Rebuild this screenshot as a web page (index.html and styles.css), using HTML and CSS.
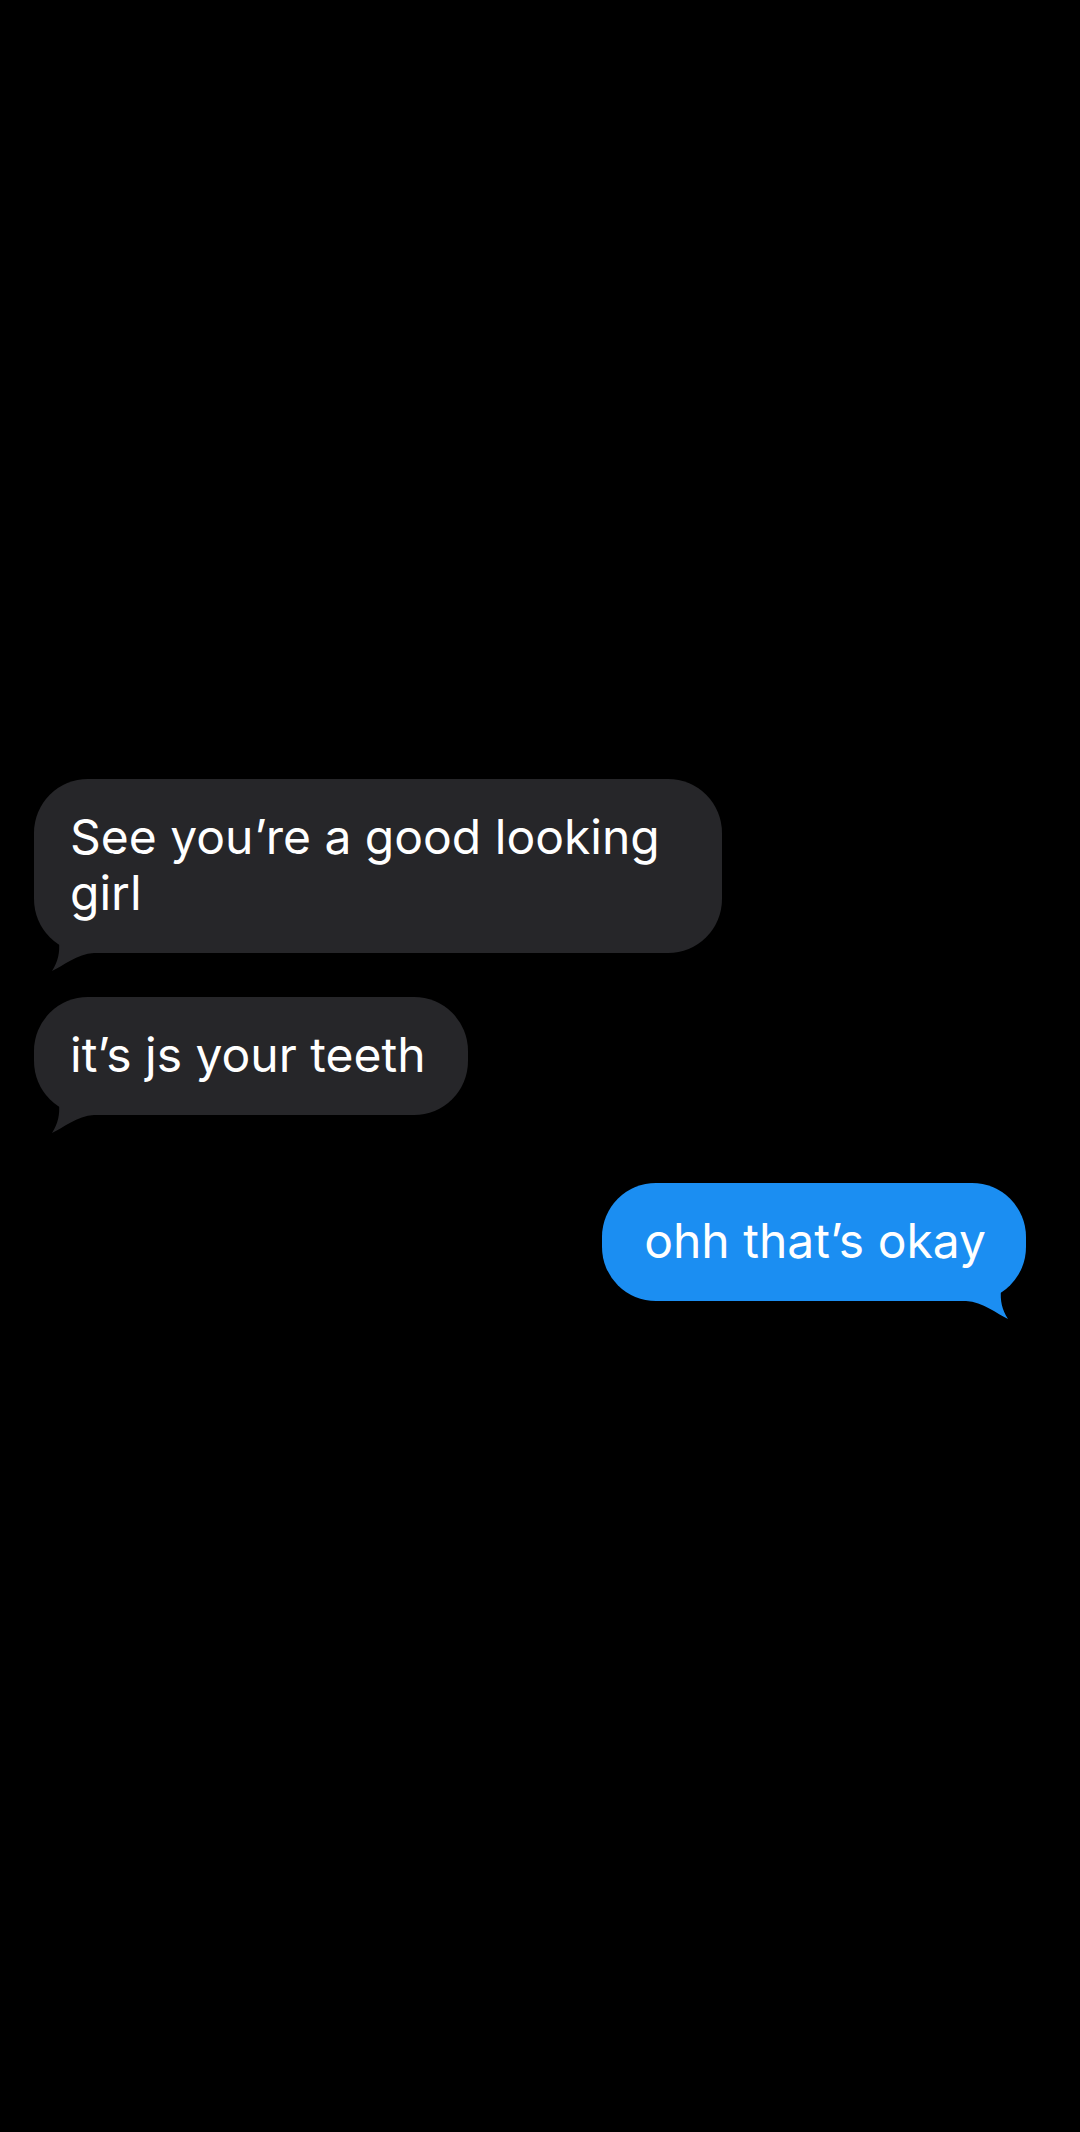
FILE: index.html
```html
<!DOCTYPE html>
<html>
<head>
<meta charset="utf-8">
<link rel="stylesheet" href="styles.css">
</head>
<body>
<main class="thread">
  <div class="bubble them">
    <span class="text">See you’re a good looking girl</span>
    <svg class="tail" width="60" height="40" viewBox="0 0 60 40"><path d="M0 0 H44 L35 9 C34 19 36 29 42 38 C31 33 17 21 0 20 Z"/></svg>
  </div>
  <div class="bubble them second">
    <span class="text">it’s js your teeth</span>
    <svg class="tail" width="60" height="40" viewBox="0 0 60 40"><path d="M0 0 H44 L35 9 C34 19 36 29 42 38 C31 33 17 21 0 20 Z"/></svg>
  </div>
  <div class="bubble me">
    <span class="text">ohh that’s okay</span>
    <svg class="tail" width="60" height="40" viewBox="0 0 60 40"><path d="M0 0 H44 L35 9 C34 19 36 29 42 38 C31 33 17 21 0 20 Z"/></svg>
  </div>
</main>
</body>
</html>
```

FILE: styles.css
```css
html, body {
  margin: 0;
  padding: 0;
  background: #000;
}
body {
  width: 1080px;
  height: 2132px;
  overflow: hidden;
  font-family: Inter, "Liberation Sans", Arial, sans-serif;
}
.thread {
  display: flex;
  flex-direction: column;
  padding: 779px 54px 0 34px;
}
.bubble {
  position: relative;
  max-width: 688px;
  box-sizing: border-box;
  border-radius: 54px;
  font-size: 48px;
  line-height: 56px;
  color: #fff;
}
.them {
  align-self: flex-start;
  background: #262629;
  padding: 30px 42px 32px 36px;
}
.them .tail {
  fill: #262629;
  left: 0;
  transform: scaleX(-1);
}
.second {
  margin-top: 44px;
}
.me {
  align-self: flex-end;
  background: #1b8ef2;
  margin-top: 68px;
  padding: 30px 40px 32px 42px;
}
.me .tail {
  fill: #1b8ef2;
  right: 0;
}
.tail {
  position: absolute;
  bottom: -20px;
  display: block;
}
```
